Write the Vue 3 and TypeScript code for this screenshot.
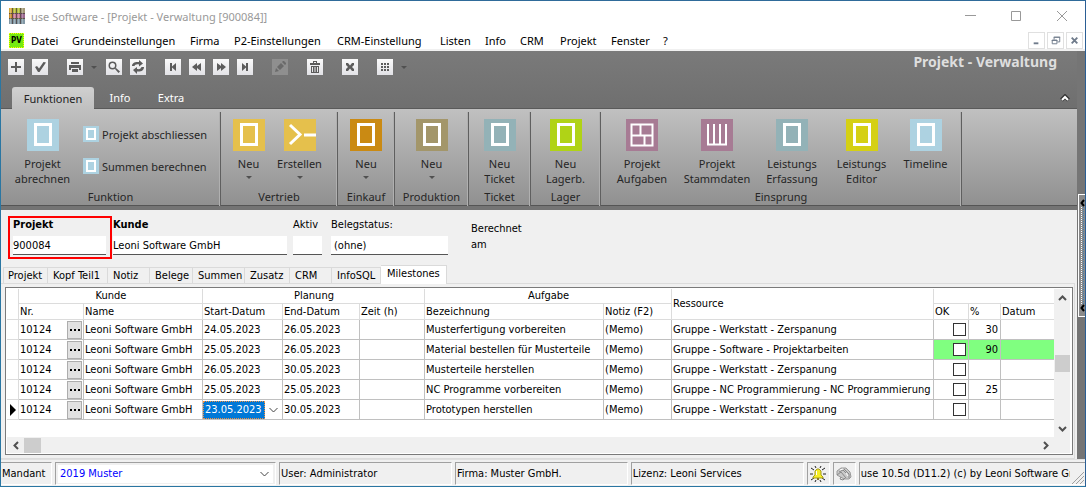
<script setup lang="ts">
import { ref } from 'vue'

interface ToolButton { name: string; gap?: string; menu?: boolean; disabled?: boolean }
interface RibbonItem { lines: string[]; tone: string; icon: string; menu?: boolean; size: string }
interface RibbonGroup { title: string; key: string; items: RibbonItem[]; small?: string[] }
interface Milestone { start: string; end: string; task: string; resource: string; percent: string; highlight?: boolean }

const menus = ['Datei', 'Grundeinstellungen', 'Firma', 'P2-Einstellungen', 'CRM-Einstellung', 'Listen', 'Info', 'CRM', 'Projekt', 'Fenster', '?']

const tools: ToolButton[] = [
  { name: 'Neu' },
  { name: 'Speichern' },
  { name: 'Drucken', gap: 'wide', menu: true },
  { name: 'Suchen' },
  { name: 'Aktualisieren' },
  { name: 'Erster', gap: 'wide' },
  { name: 'Zurück' },
  { name: 'Weiter' },
  { name: 'Letzter' },
  { name: 'Bearbeiten', gap: 'wide', disabled: true },
  { name: 'Löschen', gap: 'wide' },
  { name: 'Schliessen', gap: 'wide' },
  { name: 'Raster', gap: 'wide', menu: true },
]

const groups: RibbonGroup[] = [
  {
    title: 'Funktion', key: 'funktion',
    items: [{ lines: ['Projekt', 'abrechnen'], tone: 'sky', icon: 'page', size: 'l' }],
    small: ['Projekt abschliessen', 'Summen berechnen'],
  },
  {
    title: 'Vertrieb', key: 'vertrieb',
    items: [
      { lines: ['Neu'], tone: 'yellow', icon: 'page', menu: true, size: 's' },
      { lines: ['Erstellen'], tone: 'yellow', icon: 'arrow', menu: true, size: 's' },
    ],
  },
  { title: 'Einkauf', key: 'einkauf', items: [{ lines: ['Neu'], tone: 'orange', icon: 'page', menu: true, size: 's' }] },
  { title: 'Produktion', key: 'produktion', items: [{ lines: ['Neu'], tone: 'khaki', icon: 'page', menu: true, size: 's' }] },
  { title: 'Ticket', key: 'ticket', items: [{ lines: ['Neu', 'Ticket'], tone: 'teal', icon: 'page', size: 's' }] },
  { title: 'Lager', key: 'lager', items: [{ lines: ['Neu', 'Lagerb.'], tone: 'lime', icon: 'page', size: 's' }] },
  {
    title: 'Einsprung', key: 'einsprung',
    items: [
      { lines: ['Projekt', 'Aufgaben'], tone: 'plum', icon: 'tiles', size: 'l' },
      { lines: ['Projekt', 'Stammdaten'], tone: 'plum', icon: 'bars', size: 'l' },
      { lines: ['Leistungs', 'Erfassung'], tone: 'teal', icon: 'page', size: 'l' },
      { lines: ['Leistungs', 'Editor'], tone: 'lemon', icon: 'page', size: 'm' },
      { lines: ['Timeline'], tone: 'sky', icon: 'page', size: 'm' },
    ],
  },
]

const pageTabs = ['Projekt', 'Kopf Teil1', 'Notiz', 'Belege', 'Summen', 'Zusatz', 'CRM', 'InfoSQL', 'Milestones']
const activeTab = ref('Milestones')

const rows: Milestone[] = [
  { start: '24.05.2023', end: '26.05.2023', task: 'Musterfertigung vorbereiten', resource: 'Gruppe - Werkstatt - Zerspanung', percent: '30' },
  { start: '25.05.2023', end: '26.05.2023', task: 'Material bestellen für Musterteile', resource: 'Gruppe - Software - Projektarbeiten', percent: '90', highlight: true },
  { start: '26.05.2023', end: '30.05.2023', task: 'Musterteile herstellen', resource: 'Gruppe - Werkstatt - Zerspanung', percent: '' },
  { start: '25.05.2023', end: '25.05.2023', task: 'NC Programme vorbereiten', resource: 'Gruppe - NC Programmierung - NC Programmierung', percent: '25' },
  { start: '23.05.2023', end: '30.05.2023', task: 'Prototypen herstellen', resource: 'Gruppe - Werkstatt - Zerspanung', percent: '' },
]
const current = 4
const startDate = ref(rows[current].start)
const projekt = ref('900084')
const kunde = ref('Leoni Software GmbH')
const aktiv = ref('')
const status = ref('(ohne)')
</script>

<template>
  <div class="window">
    <header class="titlebar">
      <svg class="app-icon" viewBox="0 0 16 16" shape-rendering="crispEdges" aria-hidden="true">
        <path fill="#d5a83c" d="M0 0h4v16H0z" /><path fill="#b4bd39" d="M4 0h4v16H4z" />
        <path fill="#b3c23d" d="M8 0h4v16H8z" /><path fill="#a39a78" d="M12 0h4v16h-4z" />
        <path fill="#c88a2b" d="M0 5h4v5H0z" /><path fill="#c77a94" d="M4 5h8v5H4z" /><path fill="#9b6a91" d="M12 5h4v5h-4z" />
        <path fill="#8298a5" d="M0 11h16v5H0z" />
        <path fill="#4a4040" d="M3 0h1v16H3zM7 0h1v16H7zM11 0h1v16h-1zM0 5h16v1H0zM0 10h16v1H0z" opacity=".8" />
        <path fill="#fff" d="M1 0h1v16H1zM5 0h1v16H5zM9 0h1v16H9zM13 0h1v16h-1z" opacity=".25" />
      </svg>
      <span class="caption">use Software - [Projekt - Verwaltung [900084]]</span>
      <div class="caption-buttons">
        <button aria-label="Minimieren"><svg viewBox="0 0 11 11"><path d="M0 4.500h11" /></svg></button>
        <button aria-label="Maximieren"><svg viewBox="0 0 11 11"><path d="M.5.5h9v9h-9z" /></svg></button>
        <button aria-label="Fenster schliessen"><svg viewBox="0 0 11 11"><path d="M0 0l10 10M10 0L0 10" /></svg></button>
      </div>
    </header>

    <nav class="menubar">
      <span class="pv">PV</span>
      <div class="menu-items"><button v-for="m in menus" :key="m">{{ m }}</button></div>
      <div class="mdi">
        <button aria-label="Dokument minimieren"><svg viewBox="0 0 16 16"><path d="M5 11h5" stroke-width="2" /></svg></button>
        <button aria-label="Dokument wiederherstellen"><svg viewBox="0 0 16 16"><path d="M6.500 7V4.500h6v5H10M6 4.500h7M4.500 7.500h5v4h-5zM4 8h6" /></svg></button>
        <button aria-label="Dokument schliessen"><svg viewBox="0 0 16 16"><path d="M5 5l6 6M11 5l-6 6" stroke-width="2" /></svg></button>
      </div>
    </nav>

    <div class="workspace">
      <main>
        <div class="head">
          <div class="toolbar">
            <template v-for="t in tools" :key="t.name">
              <button class="tool" :class="t.gap" :disabled="t.disabled" :aria-label="t.name">
                <svg viewBox="0 0 16 16" aria-hidden="true">
                  <path v-if="t.name === 'Neu'" d="M7 3h2v4h4v2H9v4H7V9H3V7h4z" />
                  <path v-else-if="t.name === 'Speichern'" d="M3 8l2-1 2 2.500L11.500 3 14 3.500 7.500 13H6z" />
                  <template v-else-if="t.name === 'Drucken'">
                    <path d="M4 3h8v2H4zM2 6h12v5h-2V9H4v2H2z" /><path d="M5 10h6v3H5z" />
                  </template>
                  <path v-else-if="t.name === 'Suchen'" fill-rule="evenodd" d="M6.500 2.500a4 4 0 1 0 0 8 4 4 0 0 0 0-8m0 1.500a2.500 2.500 0 1 1 0 5 2.500 2.500 0 0 1 0-5M9 10l1-1 4 3.500-1.500 1.500z" />
                  <path v-else-if="t.name === 'Aktualisieren'" d="M2 7c0-3 3-4.500 7-4V1l4 3.500L9 7.500V5.500C6 5 5 6 4.500 7zM14 8c0 3.500-3 5-7 4.500V15l-4-4 4-3v2c3 .5 4-.5 4.500-2z" />
                  <path v-else-if="t.name === 'Erster'" d="M5 4h2v3.500L11 4v8L7 8.500V12H5z" />
                  <path v-else-if="t.name === 'Zurück'" d="M3 8l5-4v3l4-3v8L8 9v3z" />
                  <path v-else-if="t.name === 'Weiter'" d="M13 8L8 4v3L4 4v8l4-3v3z" />
                  <path v-else-if="t.name === 'Letzter'" d="M11 4H9v3.500L5 4v8l4-3.500V12h2z" />
                  <path v-else-if="t.name === 'Bearbeiten'" d="M3 13l1-4 3 3zM5 8l4-4 3 3-4 4zM10 3l1-1h1l2 2v1l-1 1z" />
                  <path v-else-if="t.name === 'Löschen'" fill-rule="evenodd" d="M3 4h3V2h4v2h3v2H3zm4-1v1h2V3zM4 7h8v7H4zm1 1v5h1V8zm2.500 0v5h1V8zM10 8v5h1V8z" />
                  <path v-else-if="t.name === 'Schliessen'" d="M4 4h2l2 2.500L10 4h2v2l-2 2 2 2v2h-2L8 9.500 6 12H4v-2l2-2-2-2z" />
                  <path v-else d="M4 4h2v2H4zm3 0h2v2H7zm3 0h2v2h-2zM4 7h2v2H4zm3 0h2v2H7zm3 0h2v2h-2zM4 10h2v2H4zm3 0h2v2H7zm3 0h2v2h-2z" />
                </svg>
              </button>
              <i v-if="t.menu" class="tri tool-tri"></i>
            </template>
            <h1>Projekt - Verwaltung</h1>
          </div>
          <div class="ribbon-tabs">
            <button class="on">Funktionen</button>
            <button>Info</button>
            <button>Extra</button>
            <button class="collapse" aria-label="Menüband einklappen">
              <svg viewBox="0 0 10 8"><path d="M1.500 6L5 2.500 8.500 6" fill="none" stroke="#333" stroke-width="4" /><path d="M2 6l3-3 3 3" fill="none" stroke="#fff" stroke-width="2" /></svg>
            </button>
          </div>
        </div>

        <div class="ribbon">
          <section v-for="g in groups" :key="g.key" class="group" :class="g.key">
            <div class="group-body">
              <button v-for="i in g.items" :key="i.lines.join()" class="big" :class="i.size">
                <svg class="icon" :class="i.tone" viewBox="0 0 32 32" aria-hidden="true">
                  <rect v-if="i.icon === 'page'" x="8.500" y="5.500" width="15" height="20" />
                  <path v-else-if="i.icon === 'arrow'" d="M6 6l10 9.500L6 25M20 16h12" />
                  <path v-else-if="i.icon === 'tiles'" class="thin" d="M5.500 5.500h21v21h-21zM5 16.500h22M14.500 6v10M18.500 17v9" />
                  <path v-else class="thin" d="M7 5v20.500h18V5M13 5v20M19 5v20" />
                </svg>
                <span v-for="l in i.lines" :key="l">{{ l }}</span>
                <i v-if="i.menu" class="tri"></i>
              </button>
              <div v-if="g.small" class="smalls">
                <button v-for="s in g.small" :key="s">
                  <svg class="icon sky" viewBox="0 0 16 16" aria-hidden="true"><rect x="4" y="3" width="8" height="10" /></svg>{{ s }}
                </button>
              </div>
            </div>
            <h2>{{ g.title }}</h2>
          </section>
        </div>

        <form class="form" @submit.prevent>
          <label class="field marked"><b>Projekt</b><input v-model="projekt" type="text"></label>
          <label class="field kunde"><b>Kunde</b><input v-model="kunde" type="text"></label>
          <label class="field aktiv"><span>Aktiv</span><input v-model="aktiv" type="text"></label>
          <label class="field status"><span>Belegstatus:</span><input v-model="status" type="text"></label>
          <p>Berechnet<br>am</p>
        </form>

        <div class="page-tabs" role="tablist">
          <button v-for="t in pageTabs" :key="t" role="tab" :aria-selected="t === activeTab" :class="{ on: t === activeTab }" @click="activeTab = t">{{ t }}</button>
        </div>

        <div class="page">
          <div class="grid-box">
            <div class="grid-main">
              <table>
                <colgroup>
                  <col class="c-ind"><col class="c-nr"><col class="c-name"><col class="c-start"><col class="c-end"><col class="c-zeit">
                  <col class="c-bez"><col class="c-notiz"><col class="c-res"><col class="c-ok"><col class="c-pct"><col class="c-datum">
                </colgroup>
                <thead>
                  <tr>
                    <th rowspan="2"></th><th colspan="2" class="mid">Kunde</th><th colspan="3" class="mid">Planung</th>
                    <th colspan="2" class="mid">Aufgabe</th><th rowspan="2">Ressource</th><th colspan="3"></th>
                  </tr>
                  <tr>
                    <th>Nr.</th><th>Name</th><th>Start-Datum</th><th>End-Datum</th><th>Zeit (h)</th>
                    <th>Bezeichnung</th><th>Notiz (F2)</th><th>OK</th><th>%</th><th>Datum</th>
                  </tr>
                </thead>
                <tbody>
                  <tr v-for="(r, n) in rows" :key="n" :class="{ hit: r.highlight }">
                    <td class="ind"><i v-if="n === current" class="pointer"></i></td>
                    <td><div class="split"><span>10124</span><button class="dots" aria-label="Kunde auswählen"><i></i><i></i><i></i></button></div></td>
                    <td>Leoni Software GmbH</td>
                    <td v-if="n === current" class="edit">
                      <div class="split">
                        <input v-model="startDate" type="text" aria-label="Start-Datum">
                        <button class="drop" aria-label="Datum wählen"><svg viewBox="0 0 9 6"><path d="M.5 1l4 4 4-4" /></svg></button>
                      </div>
                    </td>
                    <td v-else>{{ r.start }}</td>
                    <td>{{ r.end }}</td>
                    <td></td>
                    <td>{{ r.task }}</td>
                    <td>(Memo)</td>
                    <td>{{ r.resource }}</td>
                    <td class="ok"><input type="checkbox" :aria-label="'OK ' + r.task"></td>
                    <td class="pct">{{ r.percent }}</td>
                    <td class="date"></td>
                  </tr>
                </tbody>
              </table>
              <div class="vscroll">
                <button aria-label="Nach oben"><svg viewBox="0 0 9 6"><path d="M1 5l3.500-3.500L8 5" /></svg></button>
                <i></i>
                <button aria-label="Nach unten"><svg viewBox="0 0 9 6"><path d="M1 1l3.500 3.500L8 1" /></svg></button>
              </div>
            </div>
            <div class="hscroll">
              <button aria-label="Nach links"><svg viewBox="0 0 6 9"><path d="M5 1L1.500 4.500 5 8" /></svg></button>
              <i></i>
              <button aria-label="Nach rechts"><svg viewBox="0 0 6 9"><path d="M1 1l3.500 3.500L1 8" /></svg></button>
            </div>
          </div>
        </div>
      </main>
      <aside>
        <button class="handle" aria-label="Seitenleiste öffnen">
          <svg viewBox="0 0 5 8"><path d="M4 1L1.500 4 4 7" /></svg>
          <i></i>
          <svg viewBox="0 0 5 8"><path d="M4 1L1.500 4 4 7" /></svg>
        </button>
      </aside>
    </div>

    <footer class="statusbar">
      <label class="cell mandant" for="mandant">Mandant</label>
      <div class="cell combo">
        <select id="mandant"><option>2019 Muster</option></select>
        <svg viewBox="0 0 9 6" aria-hidden="true"><path d="M.5 1l4 4 4-4" /></svg>
      </div>
      <div class="cell info">User: Administrator</div>
      <div class="cell info">Firma: Muster GmbH.</div>
      <div class="cell info">Lizenz: Leoni Services</div>
      <div class="cell pic">
        <svg viewBox="0 0 16 16" aria-hidden="true">
          <path d="M1 2l3 2M15 2l-3 2M0 8h3M13 8h3M1 14l3-2M15 14l-3-2M5 0l1 2M11 0l-1 2M5 16l1-2M11 16l-1-2" stroke="#222" />
          <path d="M7 3h2l2 2v4l2 2v1H3v-1l2-2V5z" fill="#f5ed24" stroke="#a59a20" /><path d="M7 12h2v2H7z" fill="#8a7a20" />
          <path d="M6.500 5v4" stroke="#fff" />
        </svg>
      </div>
      <div class="cell pic">
        <svg viewBox="0 0 16 16" aria-hidden="true">
          <path d="M1 5l4-3h5l4 4 1 5-2 2H8L1 9z" fill="#c9c9c9" stroke="#999" />
          <path d="M3 6l4-2 4 4M1 9l4-3 5 6M8 3l5 5v4M5 11l-1 2 3 1 2-2" fill="none" stroke="#888" />
          <path d="M4 4l3-1M10 7l2 3" stroke="#fff" />
        </svg>
      </div>
      <div class="cell version"><span>use 10.5d (D11.2) (c) by Leoni Software GmbH</span>
        <svg class="grip" viewBox="0 0 12 12" aria-hidden="true"><path d="M0 12L12 0M4 12l8-8M8 12l4-4" /></svg>
      </div>
    </footer>
  </div>
</template>

<style>
body { margin: 0; }
</style>

<style scoped>
* { box-sizing: border-box; }
.window {
  display: flex; flex-direction: column; min-height: 100vh; overflow: hidden;
  border: 1px solid #2a76a2; border-top-color: #2f6b9a; border-right-color: #2b5f95;
  background: #f0f0f0; color: #000;
  font: 11px/14px "DejaVu Sans Condensed", "DejaVu Sans", sans-serif;
}
button, input, select { font: inherit; color: inherit; margin: 0; padding: 0; border: 0; background: none; border-radius: 0; outline: none; }
svg { display: block; }
.titlebar, .menubar, .head, .ribbon { font-family: "Noto Sans", "Open Sans", sans-serif; font-size: 11px; line-height: 15px; }

.titlebar { display: flex; align-items: center; height: 30px; padding-left: 8px; background: #fff; color: #999; }
.app-icon { width: 16px; height: 16px; margin-right: 6px; }
.caption-buttons { display: flex; margin-left: auto; }
.caption-buttons button { display: grid; place-items: center; width: 46px; height: 28px; }
.caption-buttons svg { width: 11px; height: 11px; fill: none; stroke: #999; }

.menubar { display: flex; align-items: center; height: 20px; padding-left: 8px; background: #fff; border-bottom: 2px solid #f0f0f0; }
.pv { width: 15px; height: 15px; border: 1px dotted #ff0; background: #75ea12; font: bold 8px/13px "DejaVu Sans Condensed", sans-serif; text-align: center; }
.menu-items { display: grid; grid-template-columns: 41px 118px 44px 103px 103px 45px 35px 40px 51px 52px 20px; margin-left: 7px; }
.menu-items button { text-align: left; white-space: nowrap; }
.mdi { display: flex; gap: 2px; margin: 0 2px 0 auto; }
.mdi button { width: 17px; height: 17px; border: 1px solid #e0e0e0; }
.mdi svg { width: 15px; height: 15px; fill: none; stroke: #6f7b8b; }

.workspace { display: flex; flex: 1; }
main { display: flex; flex-direction: column; flex: 1; min-width: 0; }
.head { background: linear-gradient(#7a7a7a, #6f6f6f); border-bottom: 1px solid #5a5a5a; color: #fff; }
.toolbar { display: flex; align-items: center; height: 36px; padding: 0 20px 4px 7px; }
.tool { width: 16px; height: 16px; margin-right: 8px; background: linear-gradient(#fafafa, #e2e2e6); }
.tool.wide { margin-left: 11px; }
.tool svg { width: 16px; height: 16px; fill: #5c5c5c; }
.tool:disabled { background: #8f8f8f; }
.tool:disabled svg { fill: #6a6a6a; }
.tri { display: block; width: 0; border: 3px solid transparent; border-top-color: #505050; border-bottom: 0; }
.tool-tri { margin: 0 9px 0 0; }
h1 { margin: 0 0 10px auto; color: #dedede; font-size: 14px; line-height: 18px; }
.ribbon-tabs { display: flex; height: 21px; padding-left: 11px; }
.ribbon-tabs button { width: 50px; color: #fff; text-align: center; }
.ribbon-tabs .on { width: 82px; background: linear-gradient(#d0d0d0, #c0c0c0); border-radius: 3px 3px 0 0; color: #222; margin-bottom: -1px; }
.ribbon-tabs .on + button { width: 52px; }
.ribbon-tabs .collapse { width: 24px; margin-left: auto; display: grid; place-items: center; }
.collapse svg { width: 10px; height: 8px; }

.ribbon { display: flex; height: 101px; background: linear-gradient(#c0c0c0, #909090); border-bottom: 4px solid #747474; box-shadow: inset 0 -1px #555; color: #262626; }
.group { display: flex; flex-direction: column; margin-top: 3px; border-right: 1px solid #5f5f5f; box-shadow: inset -1px 0 #b0b0b0; padding-bottom: 3px; }
.group-body { display: flex; justify-content: center; flex: 1; padding-top: 7px; }
.funktion { width: 220px; } .vertrieb { width: 117px; } .einkauf { width: 57px; } .produktion { width: 74px; }
.ticket { width: 62px; } .lager { width: 70px; } .einsprung { width: 361px; }
.vertrieb .group-body { padding-right: 10px; }
h2 { margin: 0; font-size: 11px; font-weight: normal; line-height: 15px; text-align: center; }
.big { display: flex; flex-direction: column; align-items: center; white-space: nowrap; height: 70px; }
.big.s { width: 51px; } .big.m { width: 64px; } .big.l { width: 75px; }
.big .icon { width: 32px; height: 32px; margin-bottom: 5px; }
.big .tri { margin-top: 5px; }
.icon { fill: none; stroke: #fff; stroke-width: 3; }
.icon .thin { stroke-width: 2; }
.sky { background: #add2e1; } .yellow { background: #e5c04c; } .orange { background: #ca8a13; } .khaki { background: #a3966a; }
.teal { background: #93b2b7; } .lime { background: #b0d316; } .plum { background: #a77b94; } .lemon { background: #d5d014; }
.smalls { display: flex; flex-direction: column; gap: 16px; width: 136px; padding: 7px 0 0 3px; }
.smalls button { display: flex; align-items: center; gap: 3px; height: 16px; white-space: nowrap; }
.smalls .icon { flex: none; width: 16px; height: 16px; stroke-width: 2; }

.form { display: flex; align-items: flex-start; height: 55px; padding: 6px 7px 0; }
.field { display: flex; flex-direction: column; gap: 4px; padding-top: 2px; white-space: nowrap; }
.field input { width: 100%; height: 19px; background: #fff; border-bottom: 1px solid #555; }
.marked { width: 104px; height: 43px; border: 2px solid #f00; padding: 0 4px 0 3px; }
.kunde { width: 174px; margin-left: 1px; }
.aktiv { width: 29px; margin-left: 6px; }
.status { width: 117px; margin-left: 9px; }
.status input { padding-left: 3px; }
.form p { margin: 5px 0 0 23px; line-height: 16px; }

.page-tabs { display: grid; grid-template-columns: 45px 60px 42px 43px 52px 45px 42px 49px 66px; align-items: end; height: 18px; padding-left: 2px; }
.page-tabs button { height: 16px; padding-left: 5px; border: 1px solid #dadada; border-width: 1px 1px 0 0; text-align: left; white-space: nowrap; }
.page-tabs button:first-child { border-left-width: 1px; padding-left: 4px; }
.page-tabs .on { height: 19px; margin-bottom: -1px; padding: 0 0 2px 6px; background: #fff; z-index: 1; }
.page { display: flex; flex: 1; margin-right: 2px; padding: 3px 1px 3px 4px; border: 1px solid #dcdcdc; border-left: 0; }
.grid-box { display: flex; flex-direction: column; flex: 1; min-width: 0; border: 1px solid #7a7a7a; background: #fff; padding: 1px 2px 1px 1px; }
.grid-main { display: flex; flex: 1; align-items: stretch; }
table { flex: 1; align-self: flex-start; width: 100%; table-layout: fixed; border-collapse: separate; border-spacing: 0; }
.c-ind { width: 12px; } .c-nr { width: 65px; } .c-name { width: 119px; } .c-start { width: 80px; } .c-end { width: 77px; } .c-zeit { width: 65px; }
.c-bez { width: 179px; } .c-notiz { width: 68px; } .c-ok { width: 35px; } .c-pct { width: 32px; } .c-datum { width: 53px; }
th, td { padding: 0 0 0 1px; border: 0 solid #c0c0c0; border-width: 0 1px 1px 0; text-align: left; font-weight: normal; white-space: nowrap; overflow: hidden; }
th { height: 15px; line-height: 14px; border-color: #dcdcdc; }
thead tr + tr th { height: 16px; line-height: 15px; }
td { height: 20px; line-height: 19px; }
.mid { text-align: center; }
th:last-child, td.date { border-right-width: 0; }
.ind { padding: 0; border-color: #dcdcdc; }
.pointer { display: block; width: 0; margin-left: 3px; border: 6px solid transparent; border-left-color: #000; border-right: 0; }
.split { display: flex; align-items: center; justify-content: space-between; height: 19px; }
.dots { display: flex; align-items: center; justify-content: center; gap: 2px; width: 15px; height: 18px; margin-right: 1px; border: 1px solid #adadad; background: #e1e1e1; }
.dots i { width: 2px; height: 2px; background: #000; }
.edit { padding: 0; }
.edit input { width: 62px; height: 18px; padding-left: 1px; border: 1px dotted #f09040; background: #0078d7; color: #fff; }
.drop { width: 13px; }
.drop svg, .combo svg { width: 9px; height: 6px; fill: none; stroke: #444; }
.ok { line-height: 0; padding: 0 2px 0 0; text-align: right; }
.ok input { appearance: none; width: 13px; height: 13px; border: 1px solid #333; background: #fff; vertical-align: middle; }
.pct { padding-right: 2px; text-align: right; }
.hit .ok, .hit .pct, .hit .date { background: #80ff80; }
.vscroll { display: flex; flex-direction: column; align-items: center; flex: none; width: 16px; background: #f0f0f0; }
.vscroll button { width: 16px; height: 17px; display: grid; place-items: center; }
.vscroll svg { width: 9px; height: 6px; }
.vscroll i { width: 15px; height: 17px; margin: 49px 0 auto; background: #cdcdcd; }
.vscroll path, .hscroll path { fill: none; stroke: #505050; stroke-width: 2; }
.hscroll { display: flex; align-items: center; height: 16px; padding-right: 16px; background: #f0f0f0; }
.hscroll button { display: grid; place-items: center; width: 17px; height: 16px; }
.hscroll svg { width: 6px; height: 9px; }
.hscroll i { width: 17px; height: 15px; margin-right: auto; background: #cdcdcd; }

aside { width: 8px; background: #757575; }
.handle { display: flex; flex-direction: column; align-items: center; width: 7px; height: 123px; margin: 143px 0 0 1px; padding: 4px 0; border: 1px solid #fff; border-width: 1px 0 1px 1px; background: #8a8a8a; }
.handle svg { flex: none; width: 5px; height: 8px; fill: none; stroke: #000; stroke-width: 2; }
.handle i { flex: 1; width: 3px; border: 0 dotted #3d7bb0; border-left: 1px dotted #fff; border-right-width: 1px; }

.statusbar { display: flex; gap: 3px; height: 27px; padding: 2px 0 1px; border-top: 1px solid #e0e0e0; }
.cell { display: flex; align-items: center; min-width: 0; padding-left: 1px; border: 1px solid #a0a0a0; border-right-color: #fff; border-bottom-color: #fff; white-space: nowrap; }
.mandant { width: 51px; border-left: 0; }
.combo { width: 221px; padding: 2px; }
.combo select { flex: 1; appearance: none; height: 18px; padding-left: 2px; background: #fff; color: #00f; }
.combo svg { margin: 0 4px 0 -13px; }
.info { flex: 172 1 0; }
.pic { justify-content: center; width: 23px; padding: 0; }
.pic svg { width: 16px; height: 16px; }
.version { flex: 227 1 0; border-right: 0; }
.version span { flex: 1; overflow: hidden; }
.grip { flex: none; align-self: flex-end; width: 12px; height: 12px; margin: 0 1px 0 2px; fill: none; stroke: #a0a0a0; }
</style>
